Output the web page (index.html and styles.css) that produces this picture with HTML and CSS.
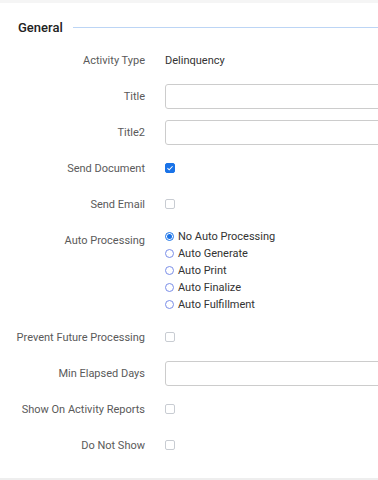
FILE: index.html
```html
<!DOCTYPE html>
<html lang="en">
<head>
    <meta charset="UTF-8">
    <title>Activity - General</title>
    <link rel="stylesheet" href="styles.css">
</head>
<body>
    <div class="top-strip"></div>
    <div class="panel">
        <!-- section header -->
        <div class="section-head">
            <h2 class="section-title">General</h2>
            <div class="section-rule"></div>
        </div>

        <div class="form">
            <div class="row">
                <label class="label">Activity Type</label>
                <div class="field"><span class="value">Delinquency</span></div>
            </div>
            <div class="row">
                <label class="label">Title</label>
                <div class="field"><input class="text-input" type="text"></div>
            </div>
            <div class="row">
                <label class="label">Title2</label>
                <div class="field"><input class="text-input" type="text"></div>
            </div>
            <div class="row">
                <label class="label">Send Document</label>
                <div class="field"><span class="check checked"><svg viewBox="0 0 10 10" width="8" height="8"><path d="M1.8 5.2 L4 7.2 L8.2 2.8" fill="none" stroke="#fff" stroke-width="1.3"/></svg></span></div>
            </div>
            <div class="row">
                <label class="label">Send Email</label>
                <div class="field"><span class="check"></span></div>
            </div>
            <div class="row row-top">
                <label class="label">Auto Processing</label>
                <div class="field radios">
                    <div class="radio-item"><span class="radio on"></span>No Auto Processing</div>
                    <div class="radio-item"><span class="radio"></span>Auto Generate</div>
                    <div class="radio-item"><span class="radio"></span>Auto Print</div>
                    <div class="radio-item"><span class="radio"></span>Auto Finalize</div>
                    <div class="radio-item"><span class="radio"></span>Auto Fulfillment</div>
                </div>
            </div>
            <div class="row">
                <label class="label">Prevent Future Processing</label>
                <div class="field"><span class="check"></span></div>
            </div>
            <div class="row">
                <label class="label">Min Elapsed Days</label>
                <div class="field"><input class="text-input" type="text"></div>
            </div>
            <div class="row">
                <label class="label">Show On Activity Reports</label>
                <div class="field"><span class="check"></span></div>
            </div>
            <div class="row">
                <label class="label">Do Not Show</label>
                <div class="field"><span class="check"></span></div>
            </div>
        </div>
    </div>
    <div class="bottom-strip"></div>
</body>
</html>
```

FILE: styles.css
```css
* {
    margin: 0;
    padding: 0;
    box-sizing: border-box;
}

body {
    font-family: Roboto, "Liberation Sans", sans-serif;
    font-size: 11px;
    color: #333333;
    background-color: #ffffff;
    width: 378px;
    height: 480px;
    overflow: hidden;
    display: flex;
    flex-direction: column;
}

.top-strip {
    height: 3px;
    background-color: #f5f5f5;
}

.bottom-strip {
    height: 2px;
    background-color: #eeeeee;
    margin-top: auto;
}

/* section header */
.section-head {
    display: flex;
    align-items: center;
    padding: 17px 0 0 18px;
}

.section-title {
    font-size: 13px;
    font-weight: 500;
    color: #222222;
    margin-right: 10px;
}

.section-rule {
    flex: 1;
    height: 1px;
    background-color: #bcd5f5;
}

/* form rows */
.form {
    display: flex;
    flex-direction: column;
    padding-top: 7px;
}

.row {
    display: flex;
    align-items: center;
    min-height: 36px;
}

.row-top {
    align-items: flex-start;
    padding: 6px 0 6px;
}

.row-top .label {
    padding-top: 6px;
}

.label {
    width: 145px;
    flex-shrink: 0;
    text-align: right;
    color: #5a5a5a;
    margin-right: 20px;
}

.field {
    flex: 1;
    display: flex;
    align-items: center;
    min-width: 0;
    overflow: hidden;
}

.value {
    color: #333333;
}

.text-input {
    width: 240px;
    flex-shrink: 0;
    height: 25px;
    border: 1px solid #cccccc;
    border-radius: 3px;
    background-color: #ffffff;
    outline: none;
}

.check {
    width: 10px;
    height: 10px;
    border: 1px solid #c8ccd2;
    border-radius: 2px;
    display: flex;
    align-items: center;
    justify-content: center;
}

.check.checked {
    background-color: #1a73e8;
    border-color: #1a73e8;
}

/* radio group */
.radios {
    flex-direction: column;
    align-items: flex-start;
}

.radio-item {
    display: flex;
    align-items: center;
    height: 17px;
    color: #333333;
}

.radio {
    width: 9px;
    height: 9px;
    border: 1px solid #7a8ee8;
    border-radius: 50%;
    margin-right: 4px;
    display: flex;
    align-items: center;
    justify-content: center;
}

.radio.on {
    border-color: #1a73e8;
}

.radio.on::after {
    content: "";
    width: 5px;
    height: 5px;
    border-radius: 50%;
    background-color: #1a73e8;
}
```
